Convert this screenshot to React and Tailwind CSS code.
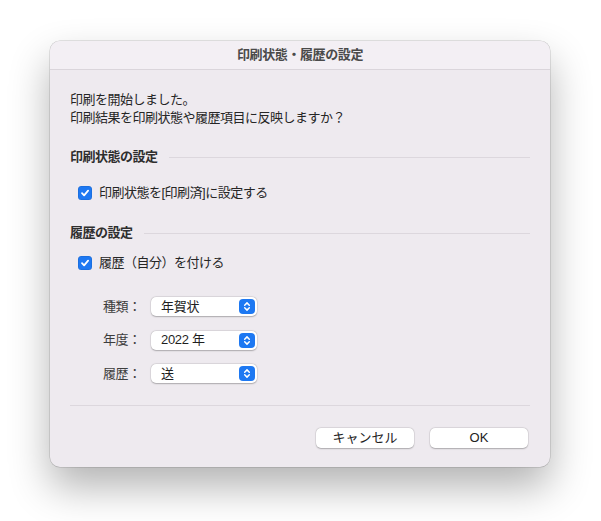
import React from 'react'

const font = { fontFamily: '"Liberation Sans", "Noto Sans CJK JP", sans-serif' }

function Checkbox() {
  return (
    <span className="flex h-[14px] w-[14px] shrink-0 items-center justify-center rounded-[3.5px] bg-[#1d78f2] shadow-[inset_0_0_0_0.5px_rgba(0,0,0,0.15)]">
      <svg width="10" height="10" viewBox="0 0 10 10" fill="none">
        <path d="M2 5.2 L4.1 7.3 L8.1 2.6" stroke="white" strokeWidth="1.8" strokeLinecap="round" strokeLinejoin="round" />
      </svg>
    </span>
  )
}

function SectionHeader({ title, className }) {
  return (
    <div className={`flex h-[20px] items-center gap-[11px] ${className}`}>
      <span className="text-[13px] font-bold tracking-[-0.5px] text-[#2e2e2e]">{title}</span>
      <div className="h-px flex-1 bg-[#dcd7dd]" />
    </div>
  )
}

function SelectRow({ label, value }) {
  return (
    <div className="ml-[33px] flex h-[20px] items-center">
      <span className="w-[48px] text-[13px] tracking-[-0.4px] text-[#3d3d3d]">{label}</span>
      <div className="flex h-[19px] w-[106px] items-center justify-between rounded-[5px] bg-white pl-[10px] pr-[2px] shadow-[0_0.5px_1.5px_rgba(0,0,0,0.25),0_0_0_0.5px_rgba(0,0,0,0.08)]">
        <span className="text-[13px] tracking-[-0.3px] text-[#1f1f1f]">{value}</span>
        <span className="flex h-[15px] w-[16px] items-center justify-center rounded-[4px] bg-[#1d78f2]">
          <svg width="8" height="11" viewBox="0 0 8 11" fill="none">
            <path d="M1.7 4.2 L4 1.9 L6.3 4.2 M1.7 6.8 L4 9.1 L6.3 6.8" stroke="white" strokeWidth="1.5" strokeLinecap="round" strokeLinejoin="round" />
          </svg>
        </span>
      </div>
    </div>
  )
}

function Button({ children }) {
  return (
    <button className="h-[20px] w-[98px] rounded-[5px] bg-white text-[13px] text-[#222] shadow-[0_0.5px_1.5px_rgba(0,0,0,0.25),0_0_0_0.5px_rgba(0,0,0,0.08)]">
      {children}
    </button>
  )
}

export default function App() {
  return (
    <div className="h-[521px] w-[601px] bg-white pl-[50px] pt-[41px]" style={font}>
      <div className="flex h-[426px] w-[500px] flex-col overflow-hidden rounded-[10px] bg-[#eeeaef] shadow-[0_0_0_0.5px_rgba(0,0,0,0.2),0_20px_40px_rgba(0,0,0,0.3)]">
        <div className="flex h-[29px] shrink-0 items-center justify-center border-b border-[#dad5db] bg-[#f3eff4] text-[13px] font-bold tracking-[-0.4px] text-[#4a4a4a]">
          印刷状態・履歴の設定
        </div>
        <div className="flex flex-col px-[20px] tracking-[-0.5px]">
          <p className="mt-[21px] text-[13px] leading-[17.5px] text-[#262626]">
            印刷を開始しました。
            <br />
            印刷結果を印刷状態や履歴項目に反映しますか？
          </p>

          <SectionHeader title="印刷状態の設定" className="mt-[21px]" />
          <label className="ml-[8px] mt-[15.5px] flex h-[20px] items-center gap-[7px] text-[13px] text-[#262626]">
            <Checkbox />
            印刷状態を[印刷済]に設定する
          </label>

          <SectionHeader title="履歴の設定" className="mt-[20.5px]" />
          <label className="ml-[8px] mt-[10px] flex h-[20px] items-center gap-[7px] text-[13px] text-[#262626]">
            <Checkbox />
            履歴（自分）を付ける
          </label>

          <div className="mt-[23.5px] flex flex-col gap-[13.5px]">
            <SelectRow label="種類：" value="年賀状" />
            <SelectRow label="年度：" value="2022 年" />
            <SelectRow label="履歴：" value="送" />
          </div>

          <div className="mt-[21.5px] h-px bg-[#dcd7dd]" />

          <div className="mt-[22px] flex justify-end gap-[16px] pr-[2px] tracking-normal">
            <Button>キャンセル</Button>
            <Button>OK</Button>
          </div>
        </div>
      </div>
    </div>
  )
}
